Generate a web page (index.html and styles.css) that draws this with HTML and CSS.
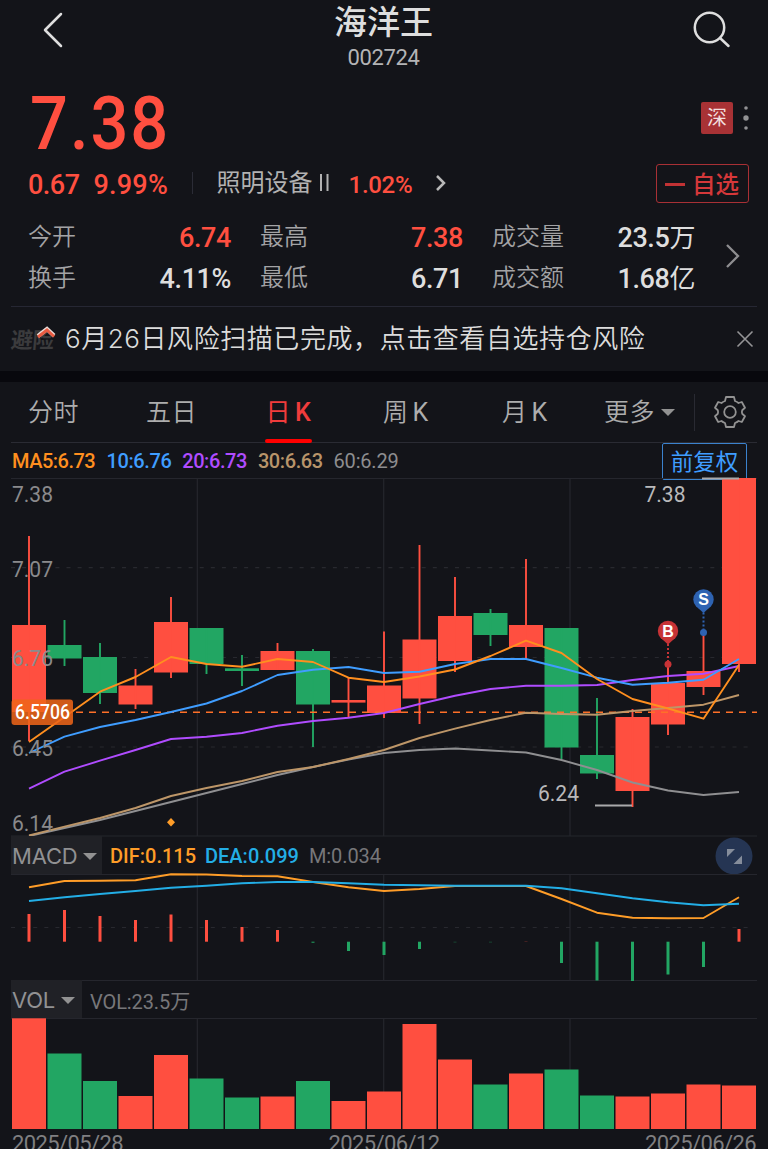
FILE: index.html
```html
<!DOCTYPE html>
<html lang="zh-CN">
<head>
<meta charset="utf-8">
<title>海洋王 002724</title>
<link rel="stylesheet" href="styles.css">
</head>
<body>
<header class="top">
  <svg class="back" width="22" height="38" viewBox="0 0 22 38"><path d="M18 3 2 19 18 35"/></svg>
  <div class="name"><h1>海洋王</h1><span class="code">002724</span></div>
  <svg class="search" width="40" height="40" viewBox="0 0 40 40"><circle cx="17.500" cy="16.500" r="14.700"/><path d="M28 27 36.500 35"/></svg>
</header>

<section class="quote">
  <div class="price-row">
    <span class="price">7.38</span>
    <span class="market">深</span>
    <svg class="dots" width="6" height="26" viewBox="0 0 6 26"><circle cx="3" cy="3" r="1.8"/><circle cx="3" cy="13" r="2.7"/><circle cx="3" cy="23" r="1.8"/></svg>
  </div>
  <div class="change-row">
    <span class="chg">0.67</span><span class="pct">9.99%</span>
    <i class="sep"></i>
    <span class="sector">照明设备<svg width="12" height="18" viewBox="0 0 12 18"><path d="M3 0V17M9.500 0V17"/></svg></span>
    <span class="sector-pct">1.02%</span>
    <svg class="go" width="12" height="18" viewBox="0 0 12 18"><path d="M2 2 9 9 2 16"/></svg>
    <button class="fav"><i></i>自选</button>
  </div>
  <div class="stats">
    <dl><dt>今开</dt><dd class="up">6.74</dd><dt>换手</dt><dd>4.11%</dd></dl>
    <dl><dt>最高</dt><dd class="up">7.38</dd><dt>最低</dt><dd>6.71</dd></dl>
    <dl><dt>成交量</dt><dd>23.5<b>万</b></dd><dt>成交额</dt><dd>1.68<b>亿</b></dd></dl>
    <svg class="more" width="16" height="26" viewBox="0 0 16 26"><path d="M2 2 13 13 2 24"/></svg>
  </div>
</section>

<section class="notice">
  <div class="logo"><span>避险</span><svg width="20" height="14" viewBox="0 0 20 14"><path class="halo" d="M2 11 11 4 18 10.500"/><path d="M2 12 11 5 18 11.500"/></svg></div>
  <p>6月26日风险扫描已完成，点击查看自选持仓风险</p>
  <svg class="close" width="18" height="18" viewBox="0 0 18 18"><path d="M1.5 1.5 16.5 16.5M16.5 1.5 1.5 16.5"/></svg>
</section>

<nav class="tabs">
  <span>分时</span><span>五日</span><span class="on">日<em>K</em></span><span>周<em>K</em></span><span>月<em>K</em></span><span class="drop">更多<i class="tri"></i></span>
  <svg class="gear" width="34" height="34" viewBox="-17 -17 34 34"><path d="M-4 -15H4L5 -11Q7 -10.3 8.5 -9L11.8 -10 15 -4.200 12.2 -1.8Q11.600 0 12.2 1.8L15 4.200 11.8 10 8.5 9Q7 10.3 5 11L4 15H-4L-5 11Q-7 10.3 -8.5 9L-11.8 10 -15 4.200 -12.2 1.8Q-11.600 0 -12.2 -1.8L-15 -4.200 -11.8 -10 -8.5 -9Q-7 -10.3 -5 -11Z"/><circle r="5.800"/></svg>
</nav>

<div class="legend ma">
  <span class="c5">MA5:6.73</span><span class="c10">10:6.76</span><span class="c20">20:6.73</span><span class="c30">30:6.63</span><span class="c60">60:6.29</span>
  <button class="adjust">前复权</button>
</div>
<svg id="kline" class="panel" width="768" height="358" viewBox="0 478 768 358"></svg>
<div class="legend sub">
  <span class="pick macd">MACD<i class="tri"></i></span>
  <span class="dif">DIF:0.115</span><span class="dea">DEA:0.099</span><span class="m">M:0.034</span>
  <svg class="expand" width="38" height="38" viewBox="0 0 38 38"><circle cx="19" cy="19" r="18.5"/><path d="M12 12H20L12 20ZM27 18.500V27H18.500Z"/></svg>
</div>
<svg id="macd" class="panel" width="768" height="106" viewBox="0 874 768 106"></svg>
<div class="legend sub">
  <span class="pick vol">VOL<i class="tri"></i></span><span class="m">VOL:23.5<b>万</b></span>
</div>
<svg id="volume" class="panel" width="768" height="111" viewBox="0 1018 768 111"></svg>
<footer class="dates"><span>2025/05/28</span><span>2025/06/12</span><span>2025/06/26</span></footer>
<script src="chart.js"></script>
</body>
</html>
```
FILE: styles.css
```css
* { box-sizing: border-box; margin: 0; padding: 0; }
html, body { height: 1149px; overflow: hidden; }
body {
  width: 768px;
  background: #131419;
  color: #dedede;
  font-family: Roboto, "Noto Sans CJK SC", sans-serif;
  display: flex;
  flex-direction: column;
}
body > * { flex: none; }
svg { display: block; fill: none; overflow: visible; }
button { background: none; font-family: inherit; }
i, em { font-style: normal; }

.top { height: 78px; padding: 11px 36px 0 43px; display: flex; justify-content: space-between; }
.back { stroke: #dedede; stroke-width: 2.5; stroke-linecap: round; stroke-linejoin: round; }
.search { stroke: #dedede; stroke-width: 2.5; stroke-linecap: round; }
.name { width: 160px; margin: -10px 0 0 10px; display: flex; flex-direction: column; align-items: center; }
.name h1 { font-size: 33px; line-height: 44px; font-weight: 500; }
.code { font-size: 22px; line-height: 26px; color: #b4b4b6; letter-spacing: -.4px; }

.price-row { height: 84px; padding: 0 19px 0 30px; display: flex; align-items: center; }
.price { font-size: 75px; line-height: 84px; font-weight: 500; color: #ff4f40; letter-spacing: 2.2px; margin-top: 5px; transform: scaleX(.89); transform-origin: 0 50%; }
.market { width: 32px; height: 32px; margin: -4px 10px 0 auto; border-radius: 2px; background: #a83235; color: #f2dede; font-size: 20px; line-height: 33px; text-align: center; }
.dots { fill: #929294; margin-top: -4px; }

.change-row { height: 42px; padding: 0 19px 0 28px; display: flex; align-items: center; color: #ff4f40; }
.chg, .pct { font-size: 27px; line-height: 40px; margin-top: 4px; font-weight: 500; letter-spacing: -.5px; }
.pct { margin-left: 14px; width: 74px; letter-spacing: .2px; }
.sep { width: 1px; height: 22px; margin: 0 24px 0 24px; background: #2b2c36; }
.sector { width: 132px; font-size: 24px; line-height: 36px; color: #b2b2b2; display: flex; align-items: center; gap: 5px; }
.sector svg { stroke: #b2b2b2; stroke-width: 2; }
.sector-pct { width: 86px; font-size: 24px; font-weight: 500; letter-spacing: -.3px; margin-top: 3px; }
.go { stroke: #b9b9b9; stroke-width: 2.5; }
.fav { margin-left: auto; width: 93px; height: 39px; border: 1px solid #a83035; border-radius: 3px; color: #d5383a; font-size: 23.5px; line-height: 34px; display: flex; align-items: center; padding: 3px 0 0 8px; font-weight: 500; }
.fav i { width: 20px; height: 2.5px; background: #c13234; margin-right: 7px; }

.stats { height: 102px; padding: 14px 20px 0 28px; display: flex; }
.stats dl { flex: none; display: grid; grid-template-columns: auto auto; grid-auto-rows: 41px; justify-content: space-between; width: 203px; margin-right: 29px; }
.stats dt { font-size: 24px; line-height: 38px; color: #a3a3a5; font-weight: 350; }
.stats dd { font-size: 27px; line-height: 40px; text-align: right; font-weight: 500; letter-spacing: -.4px; }
.stats dd b { font-size: 26px; font-weight: 400; line-height: 20px; }
.stats .up { color: #ff4f40; }
.more { flex: none; stroke: #8e8e90; stroke-width: 2.3; margin: 25px 0 0 1px; }

.notice { height: 76px; border-bottom: 11px solid #08080d; padding: 0 14px 0 11px; display: flex; align-items: center; background: linear-gradient(#262733, #262733) 11px 0 / 746px 1px no-repeat; }
.logo { position: relative; width: 54px; font-size: 22px; font-weight: 700; color: #3b3b3d; }
.logo span { display: block; transform: skewX(-5deg); letter-spacing: -.5px; margin-top: -2px; }
.logo svg { position: absolute; left: 25px; top: 1px; stroke: #e85b42; stroke-width: 3; }
.logo .halo { stroke: #eadcd8; stroke-width: 4.2; }
.notice p { font-family: Inter, "Noto Sans CJK SC", sans-serif; font-size: 26px; line-height: 50px; letter-spacing: .57px; color: #dcdcdc; font-weight: 350; white-space: nowrap; }
.close { stroke: #949496; stroke-width: 1.6; margin-left: auto; }

.tabs { height: 61px; padding: 0 20px 0 28px; display: grid; grid-template-columns: 118px 121px 116px 119px 102px 109px 34px; align-items: center; font-size: 25px; color: #adadad; background: linear-gradient(#2a2b33, #2a2b33) 11px 60px / 746px 1px no-repeat, linear-gradient(#292a32, #292a32) 694px 12px / 1px 37px no-repeat; }
.tabs span { line-height: 61px; height: 61px; letter-spacing: .5px; font-weight: 350; white-space: nowrap; }
.tabs em { font-size: 25px; font-weight: 400; margin-left: 4px; }
.tabs .on { position: relative; color: #f03c3c; width: 47px; margin-left: -2px; text-align: center; font-weight: 400; }
.tabs .on::after { content: ""; position: absolute; left: 0; bottom: 0; width: 47px; height: 4px; border-radius: 2px; background: #f00; }
.tabs .on em { font-weight: 500; }
.drop { display: flex; align-items: center; gap: 6px; }
.tri { display: inline-block; border: 7.5px solid transparent; border-top: 7px solid #929292; border-bottom: 0; }
.gear { stroke: #929292; stroke-width: 1.8; stroke-linejoin: round; margin-top: -2px; }

.legend { display: flex; align-items: center; font-size: 20px; }
.ma { height: 35px; padding: 0 21px 0 12px; font-weight: 500; letter-spacing: -.4px; }
.ma span { width: 75.7px; white-space: nowrap; }
.ma .c5 { width: 94.5px; letter-spacing: -.5px; color: #ff8f1f; }
.c10 { color: #3f9dff; }
.c20 { color: #b04cff; }
.c30 { color: #b8946a; }
.ma .c60 { color: #8d8d8f; font-weight: 400; letter-spacing: -.2px; }
.adjust { margin: 2px 0 0 auto; width: 85px; height: 37px; border: 1px solid #3b82cd; border-radius: 2px; color: #3f9dff; font-size: 22.5px; line-height: 34px; }
.sub { height: 38px; padding: 0 15px 0 11px; }
.sub > span { padding-top: 2px; }
.sub > .pick { align-self: stretch; background: #202126; color: #919193; font-family: Inter, sans-serif; font-size: 22px; line-height: 38px; display: flex; align-items: center; gap: 6px; padding-left: 1px; white-space: nowrap; letter-spacing: -.2px; }
.macd { width: 91px; margin-right: 8px; }
.vol { width: 71px; margin-right: 8px; gap: 8px; }
.dif { width: 95px; color: #ff9d28; font-weight: 500; }
.dea { width: 104px; color: #23aee6; font-weight: 500; }
.m { color: #77777a; letter-spacing: -.1px; }
.m b { font-weight: 400; }
.expand { margin: 2px 0 0 auto; fill: #253553; }
.expand path { fill: #858d9b; }
.dates { height: 20px; padding: 1px 12px 0; display: flex; justify-content: space-between; font-size: 22px; line-height: 27px; letter-spacing: -.6px; color: #7f7f81; }

.grid { stroke: #25262d; stroke-width: 1.2; }
.dash { stroke: #28292f; stroke-width: 1.2; stroke-dasharray: 4 7.1; }
.rise { fill: #ff4f40; stroke: #ff4f40; }
.fall { fill: #22a663; stroke: #22a663; }
.body { stroke: none; }
.line { stroke-width: 1.9; stroke-linejoin: round; }
.axis { fill: #8a8a8c; font-size: 22px; }
.mark { fill: #b9b9bb; font-size: 22px; }
.leader { stroke: #a9a9ab; stroke-width: 1.8; }
.avg { stroke: #ff7028; stroke-width: 1.6; stroke-dasharray: 7 6; }
.avg-box { fill: #ef6519; fill-opacity: .86; }
.avg-text { fill: #fff; font-size: 20px; font-weight: 500; }
.pin { fill: #fff; font-family: "Liberation Sans", Arial, sans-serif; font-size: 16px; font-weight: 700; text-anchor: middle; }
.buy { fill: #c73336; stroke: #c73336; }
.sell { fill: #2e63b2; stroke: #2e63b2; }
.stem { stroke-dasharray: 2 2; stroke-width: 2; }
```
FILE: chart.js
```js
const x = i => 29 + 35.5 * i;
const add = (id, s) => { document.getElementById(id).innerHTML += s; };
const line = (values, color) =>
  `<polyline class="line" stroke="${color}" points="${values.map((v, i) => x(i) + ',' + v).join(' ')}"/>`;
const grid = (y1, y2) =>
  [197.3, 383.7, 570].map(g => `<path class="grid" d="M${g} ${y1}V${y2}"/>`).join('');
const rule = y => `<path class="grid" d="M11 ${y}H757"/>`;
const dash = y => `<path class="dash" d="M11 ${y}H752"/>`;
const text = (cls, tx, ty, w, s) =>
  `<text class="${cls}" x="${tx}" y="${ty}" textLength="${w}" lengthAdjust="spacingAndGlyphs">${s}</text>`;

// direction, body top, body bottom, wick top, wick bottom
const candles = [
  [1,625,712,536,741],[0,645,658.5,620,666],[0,657,693,643,704],[1,685.5,704.5,669,709],
  [1,622,672.5,597,678],[0,628,664,628,674],[0,668.3,671,655,686],[1,651,670,643,670],
  [0,651,704.5,649,747],[1,700,702.6,677,717],[1,685.5,713,631.5,718],[1,639.5,698.5,545,724],
  [1,616,661,577,672],[0,613,635,609,646],[1,625,647,559,659],[0,628,747.5,628,759],
  [0,755,773.5,698,779],[1,717,791,709,807],[1,683,724.5,665,735],[1,671,687,632,695],
  [1,478,664,478,672]
];
const cls = d => d ? 'rise' : 'fall';
const body = (i, d, top, bottom) =>
  `<rect class="${cls(d)} body" x="${x(i) - 17}" y="${top}" width="34" height="${bottom - top}"/>`;

add('kline', grid(478, 836) + rule(478.5) + rule(836) + dash(567.7) + dash(657.5) + dash(747));
add('kline', candles.map(([d, t, b, wt, wb], i) =>
  body(i, d, t, b) + `<path class="${cls(d)}" stroke-width="1.9" d="M${x(i)} ${wt}V${wb}"/>`).join(''));
add('kline',
  '<path class="avg" d="M76 712.300H757"/>' +
  line([836,828,820,811,802,793,784,775,767,759.5,753,750,748.5,750.5,752.5,760,770,782.5,790.5,795,792], '#8f8f91') +
  line([835.5,826.7,818,808,796,788,781,772,767,759,750,738,728.7,720,712.7,714,714.7,711,708,704.7,695], '#bd9668') +
  line([788.7,771.7,760.7,750,739,736.7,733,725.7,721,717.7,713,704,695.7,689,685.7,685.7,685,680,676,673.7,666], '#b04cff') +
  line([753,736.7,727,720,712,703.5,691,675,669.7,667,673,671.7,664,659,659,668,677.7,684.7,682.7,679.7,659], '#3f9dff') +
  line([742,717,691.7,677,657,664,666.7,659,662,677.7,682,676.5,669.5,656,640.7,653,679,699,708.5,718.7,665], '#ff8f1f'));
add('kline',
  [['7.38',501.7],['7.07',576.7],['6.76',666],['6.45',755.5],['6.14',830.7]].map(([s, y]) => text('axis', 12, y, 41, s)).join('') +
  '<rect class="avg-box" x="11.500" y="699.500" width="61.500" height="25.500" rx="3"/>' +
  text('avg-text', 15, 719.3, 55, '6.5706') +
  text('mark', 644.5, 501.7, 41, '7.38') + text('mark', 538, 801.3, 41, '6.24') +
  '<path class="leader" d="M595 805.500H632M702 478.500H739"/>' +
  '<path fill="#ff9d28" d="M171 818 175 822.300 171 826.500 167 822.300Z"/>');

const pin = (c, px, py, end, s) =>
  `<g class="${c}"><path class="stem" d="M${px} ${py + 13}V${end - 3}"/><circle stroke="none" cx="${px}" cy="${end}" r="3.5"/>` +
  `<circle stroke="none" cx="${px}" cy="${py}" r="10.200"/><path stroke="none" d="M${px - 6} ${py + 8}H${px + 6}L${px} ${py + 13.5}Z"/></g>` +
  `<text class="pin" x="${px}" y="${py + 5.7}">${s}</text>`;
add('kline', pin('buy', 668, 631, 664.3, 'B') + pin('sell', 703.5, 599.5, 632.5, 'S'));

const bars = [914,910,916,920,914.5,920,927,930,942.7,951,955,949,942.5,942.5,941.2,963,980.5,981,974.5,967,929];
add('macd', grid(874, 981) + rule(874.5) + rule(980.5) + dash(927.5) +
  bars.map((v, i) => `<path class="${cls(v < 941.7)}" stroke-width="3" ${i > 11 && i < 15 ? 'opacity=".4"' : ''} d="M${x(i)} 941.700V${v}"/>`).join('') +
  line([887.3,881,880.7,880.2,874.3,874.5,876,876.3,882,887.3,891,889,886,886,886,899,912.7,917.7,918.3,918,897.3], '#ff9d28') +
  line([901,897.3,894,891,887.7,885.7,883.3,882,882,883.3,884.7,885.3,885.7,885.7,885.7,888.3,893.3,898.3,902.3,905.3,903.7], '#23aee6'));

const volumes = [1018.3,1053.5,1081,1096,1055,1078.5,1097.5,1096.5,1081,1101,1091.5,1024,1059.5,1084.5,1073.5,1069.5,1095.5,1096.5,1093.5,1084.5,1085.5];
add('volume', grid(1018, 1129) + rule(1018.5) +
  volumes.map((v, i) => body(i, candles[i][0], v, 1129)).join(''));
```
